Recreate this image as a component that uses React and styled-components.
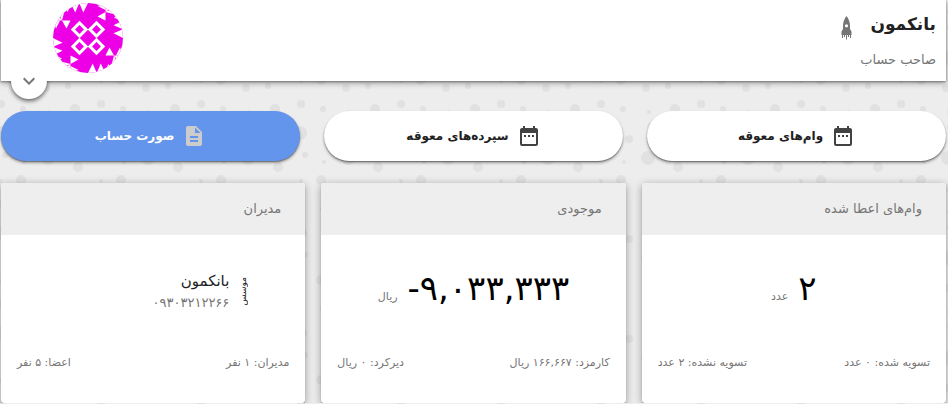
import React from "react";
import styled, { createGlobalStyle } from "styled-components";
import { MdDateRange, MdDescription, MdExpandMore } from "react-icons/md";

const bubbles = [
  [11, 11, 7], [59, 36, 7], [16, 33, 3], [79, 64, 3], [34, 87, 3], [90, 11, 3],
  [12, 82, 4], [40, 17, 4], [63, 5, 5], [57, 66, 4], [86, 87, 5], [32, 58, 5],
  [89, 45, 5], [80, 29, 2], [60, 90, 2], [35, 40, 2], [12, 59, 2],
];
const tile = encodeURIComponent(
  `<svg xmlns="http://www.w3.org/2000/svg" width="100" height="100" fill="#e1e1e1">${bubbles
    .map(([x, y, r]) => `<circle cx="${x}" cy="${y}" r="${r}"/>`)
    .join("")}</svg>`
);

const GlobalStyle = createGlobalStyle`
  *, *::before, *::after { box-sizing: border-box; }
  body {
    margin: 0;
    background-color: #ededed;
    background-image: url("data:image/svg+xml,${tile}");
    background-position: -11px 22px;
    font-family: "DejaVu Sans", sans-serif;
    color: #212121;
    overflow-x: hidden;
  }
  h1, h2, p { margin: 0; font-weight: 400; }
`;

const Page = styled.main`
  direction: rtl;
  padding: 0 2px 0 1px;
`;

const Header = styled.header`
  position: relative;
  display: flex;
  justify-content: space-between;
  align-items: flex-start;
  height: 81px;
  padding: 0 10px 0 52px;
  background: #fff;
  box-shadow: 0 1px 2px rgba(0, 0, 0, 0.35), 0 2px 6px rgba(0, 0, 0, 0.35);
`;

const TitleRow = styled.div`
  display: flex;
  align-items: center;
  gap: 18px;
  height: 48px;
`;

const Title = styled.h1`
  && { font-weight: 700; }
  font-size: 17px;
  line-height: 32px;
`;

const Subtitle = styled.p`
  font-size: 13px;
  line-height: 24px;
  color: #757575;
`;

const Avatar = styled.svg`
  width: 70px;
  height: 70px;
  margin-top: 3px;
  border-radius: 50%;
`;

const ExpandButton = styled.button`
  position: absolute;
  left: 10px;
  bottom: -18px;
  display: grid;
  place-items: center;
  width: 36px;
  height: 36px;
  padding: 0;
  border: 0;
  border-radius: 50%;
  background: #fff;
  color: #757575;

  &::before {
    content: "";
    position: absolute;
    inset: 0;
    border-radius: 50%;
    clip-path: inset(18px -8px -8px -8px);
    box-shadow: 0 2px 4px rgba(0, 0, 0, 0.6);
  }

  svg {
    width: 24px;
    height: 24px;
  }
`;

const Actions = styled.nav`
  display: grid;
  grid-template-columns: repeat(3, 1fr);
  gap: 24px;
  margin-top: 30px;
`;

const ActionButton = styled.button`
  display: flex;
  align-items: center;
  justify-content: center;
  gap: 8px;
  height: 50px;
  padding: 0;
  border: 0;
  border-radius: 25px;
  background: ${(p) => (p.$primary ? "#6495ed" : "#fff")};
  color: ${(p) => (p.$primary ? "#fff" : "#212121")};
  font: 700 12px/24px "DejaVu Sans", sans-serif;
  box-shadow: 0 1px 1px rgba(0, 0, 0, 0.3), 0 2px 3px rgba(0, 0, 0, 0.35);

  svg {
    width: 24px;
    height: 24px;
    color: ${(p) => (p.$primary ? "#ccc" : "#424242")};
  }
`;

const Cards = styled.div`
  display: grid;
  grid-template-columns: repeat(3, 1fr);
  gap: 16px;
  margin-top: 22px;
`;

const Card = styled.section`
  display: flex;
  flex-direction: column;
  border-radius: 3px;
  overflow: hidden;
  background: #fff;
  box-shadow: 0 1px 1px rgba(0, 0, 0, 0.3), 0 2px 8px rgba(0, 0, 0, 0.35);
`;

const CardTitle = styled.h2`
  padding: 0 24px;
  background: #eee;
  color: #757575;
  font-size: 13px;
  line-height: 52px;
`;

const CardBody = styled.div`
  display: flex;
  align-items: center;
  justify-content: ${(p) => (p.$start ? "flex-start" : "center")};
  height: 112px;
  padding: 0 56px;
`;

const Amount = styled.p`
  display: flex;
  align-items: baseline;
  gap: 10px;
  padding-bottom: 6px;
  color: #757575;
  font-size: 11px;
`;

const Value = styled.span`
  direction: ltr;
  color: #000;
  font-size: 34px;
  line-height: 48px;
`;

const Role = styled.span`
  writing-mode: vertical-rl;
  transform: rotate(180deg);
  font-size: 9px;
  line-height: 12px;
`;

const Person = styled.div`
  margin-right: 8px;
`;

const Name = styled.p`
  font-size: 15px;
  line-height: 24px;
`;

const Phone = styled.p`
  color: #757575;
  font-size: 13px;
  line-height: 20px;
`;

const CardFooter = styled.footer`
  display: flex;
  justify-content: space-between;
  padding: 4px 16px 28px;
  color: #757575;
  font-size: 11px;
  line-height: 24px;
`;

const RocketSvg = styled.svg`
  width: 11px;
  height: 24px;
  margin-top: 8px;
  fill: #757575;
`;

function Rocket() {
  return (
    <RocketSvg viewBox="0 0 11 24" aria-hidden="true">
      <path
        fillRule="evenodd"
        d="M5.500 0C7.500 2.500 9 6 9 10v3l1.500 2.500V19h-10v-3.500L2 13v-3C2 6 3.500 2.500 5.500 0zM5.500 8.200a1.600 1.600 0 1 0 0 3.200 1.600 1.600 0 0 0 0-3.200z"
      />
      <path d="M1 19h1v3H1zM3 19h1v2H3zM5 19h1v4.500H5zM7 19h1v2H7zM9 19h1v3H9z" />
    </RocketSvg>
  );
}

function Identicon() {
  return (
    <Avatar viewBox="0 0 70 70" role="img" aria-label="بانکمون">
      <rect width="70" height="70" fill="#ee00e6" />
      <g fill="#fff">
        {[0, 90, 180, 270].map((angle) => (
          <path
            key={angle}
            transform={`rotate(${angle} 35 35)`}
            d="M17.500 0h8.750l-4 9.500zM26.250 0H35l-4.700 9.500zM0 17.500h7l-4 8zM9 17.500h8.500l-4 8zM9 17.500L3 9v8zM9 17.500L5 9l6 1zM10 2h8l-3.500 7z"
          />
        ))}
        {[[26.5, 26.5], [43.5, 26.5], [26.5, 43.5], [43.5, 43.5]].map(([x, y]) => (
          <path
            key={`${x}-${y}`}
            fillRule="evenodd"
            transform={`translate(${x} ${y})`}
            d="M0-8.750L8.750 0 0 8.750-8.750 0zM0-4.400L-4.400 0 0 4.400 4.400 0z"
          />
        ))}
      </g>
    </Avatar>
  );
}

const actions = [
  { label: "وام‌های معوقه", Icon: MdDateRange },
  { label: "سپرده‌های معوقه", Icon: MdDateRange },
  { label: "صورت حساب", Icon: MdDescription, primary: true },
];

export default function App() {
  return (
    <Page dir="rtl" lang="fa">
      <GlobalStyle />
      <Header>
        <div>
          <TitleRow>
            <Title>بانکمون</Title>
            <Rocket />
          </TitleRow>
          <Subtitle>صاحب حساب</Subtitle>
        </div>
        <Identicon />
        <ExpandButton aria-label="نمایش بیشتر">
          <MdExpandMore />
        </ExpandButton>
      </Header>
      <Actions>
        {actions.map(({ label, Icon, primary }) => (
          <ActionButton key={label} $primary={primary}>
            <Icon />
            {label}
          </ActionButton>
        ))}
      </Actions>
      <Cards>
        <Card>
          <CardTitle>وام‌های اعطا شده</CardTitle>
          <CardBody>
            <Amount>
              <Value>۲</Value> عدد
            </Amount>
          </CardBody>
          <CardFooter>
            <span>تسویه شده: ۰ عدد</span>
            <span>تسویه نشده: ۲ عدد</span>
          </CardFooter>
        </Card>
        <Card>
          <CardTitle>موجودی</CardTitle>
          <CardBody>
            <Amount>
              <Value>-۹,۰۳۳,۳۳۳</Value> ریال
            </Amount>
          </CardBody>
          <CardFooter>
            <span>کارمزد: ۱۶۶,۶۶۷ ریال</span>
            <span>دیرکرد: ۰ ریال</span>
          </CardFooter>
        </Card>
        <Card>
          <CardTitle>مدیران</CardTitle>
          <CardBody $start>
            <Role>موسس</Role>
            <Person>
              <Name>بانکمون</Name>
              <Phone>۰۹۳۰۳۲۱۲۲۶۶</Phone>
            </Person>
          </CardBody>
          <CardFooter>
            <span>مدیران: ۱ نفر</span>
            <span>اعضا: ۵ نفر</span>
          </CardFooter>
        </Card>
      </Cards>
    </Page>
  );
}
